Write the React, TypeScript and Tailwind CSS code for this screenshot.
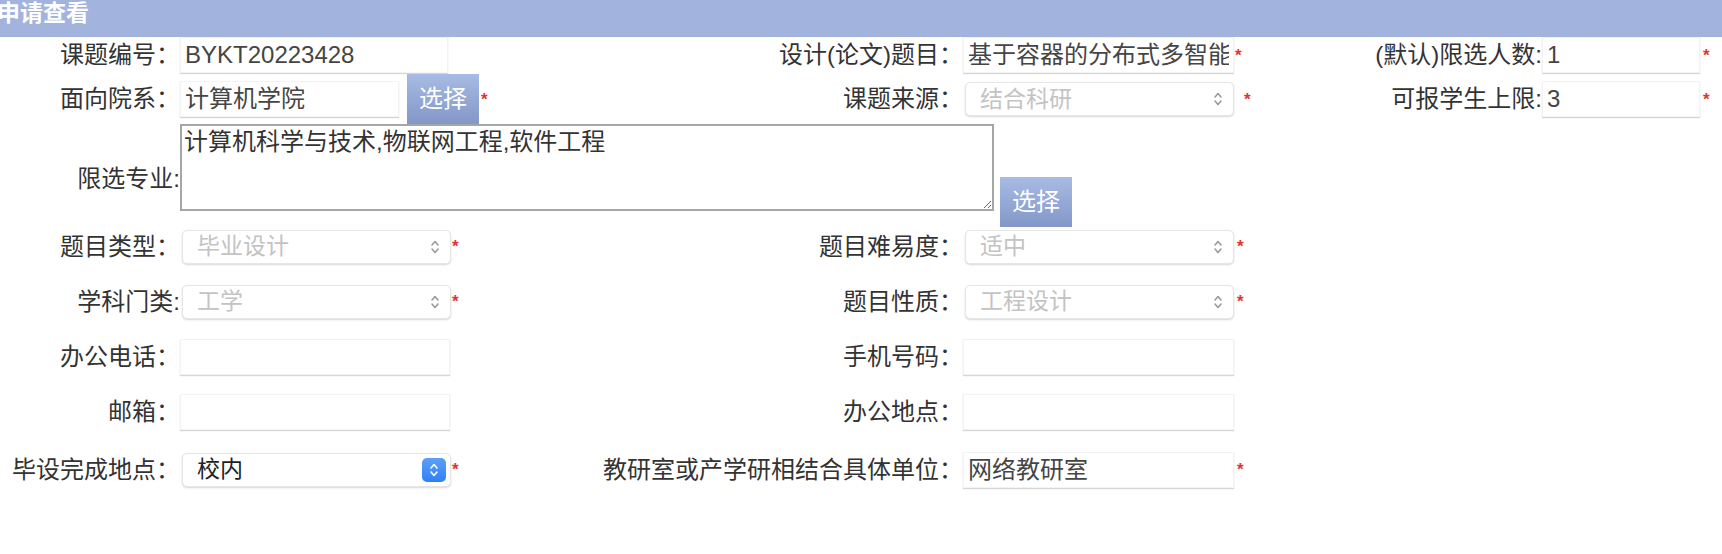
import React from "react";

const cols = "grid grid-cols-[180px_384px_399px_329px_250px_180px]";

function Star({ className = "" }: { className?: string }) {
  return <span className={`text-[#e5322d] text-[17px] font-bold leading-none ${className}`}>*</span>;
}

function Label({ children, className = "" }: { children: React.ReactNode; className?: string }) {
  return (
    <div className={`text-right text-[24px] leading-[28px] text-[#333] whitespace-nowrap ${className}`}>{children}</div>
  );
}

function TextBox({ value = "", width }: { value?: string; width: string }) {
  return (
    <input
      readOnly
      value={value}
      className={`${width} h-[36px] bg-white border border-[#f3f3f3] shadow-[0_1px_1px_rgba(0,0,0,0.16)] px-[4px] text-[24px] text-[#454545] outline-none`}
    />
  );
}

function Chevrons({ color }: { color: string }) {
  return (
    <svg width="10" height="16" viewBox="0 0 10 16" fill="none" stroke={color} strokeWidth="1.6" strokeLinecap="round" strokeLinejoin="round">
      <path d="M2 6 L5 2.5 L8 6" />
      <path d="M2 10 L5 13.5 L8 10" />
    </svg>
  );
}

function Picker({ value, active = false }: { value: string; active?: boolean }) {
  return (
    <div
      className={`ml-[2px] w-[269px] h-[34px] rounded-[5px] bg-white border border-[#e6e6e6] shadow-[0_1px_2px_rgba(0,0,0,0.16)] flex items-center justify-between pl-[14px] text-[23px] ${
        active ? "pr-[4px] text-[#222]" : "pr-[10px] text-[#c3c3c3]"
      }`}
    >
      <span className="leading-none">{value}</span>
      {active ? (
        <span className="w-[24px] h-[24px] rounded-[5px] bg-gradient-to-b from-[#5d9ff9] to-[#2f80f7] flex items-center justify-center">
          <Chevrons color="#ffffff" />
        </span>
      ) : (
        <Chevrons color="#9a9a9a" />
      )}
    </div>
  );
}

function PickButton({ className = "" }: { className?: string }) {
  return (
    <button className={`w-[72px] h-[50px] bg-gradient-to-b from-[#a8bbe4] to-[#8397c8] text-white text-[24px] leading-none ${className}`}>
      选择
    </button>
  );
}

export default function App() {
  return (
    <div className="w-[1722px] h-[554px] bg-white font-['Liberation_Sans','Noto_Sans_CJK_SC',sans-serif] overflow-hidden">
      <div className="h-[37px] bg-[#a2b4dd] text-white font-bold text-[23px] leading-[26px] -indent-[3px]">申请查看</div>

      {/* row 1 */}
      <div className={`${cols} h-[37px] items-start`}>
        <Label className="pt-[4px]">课题编号：</Label>
        <div className="flex">
          <TextBox value="BYKT20223428" width="w-[268px]" />
        </div>
        <Label className="pt-[4px]">设计(论文)题目：</Label>
        <div className="flex items-center">
          <TextBox value="基于容器的分布式多智能体系统设计与实现" width="w-[271px]" />
          <Star className="ml-[1px]" />
        </div>
        <Label className="pt-[4px]">(默认)限选人数:</Label>
        <div className="flex items-center">
          <TextBox value="1" width="w-[158px]" />
          <Star className="ml-[3px]" />
        </div>
      </div>

      {/* row 2 */}
      <div className={`${cols} h-[50px] items-center`}>
        <Label>面向院系：</Label>
        <div className="flex items-center">
          <TextBox value="计算机学院" width="w-[219px]" />
          <PickButton className="ml-[8px]" />
          <Star className="ml-[2px]" />
        </div>
        <Label>课题来源：</Label>
        <div className="flex items-center">
          <Picker value="结合科研" />
          <Star className="ml-[10px]" />
        </div>
        <Label>可报学生上限:</Label>
        <div className="flex items-center">
          <TextBox value="3" width="w-[158px]" />
          <Star className="ml-[3px]" />
        </div>
      </div>

      {/* row 3 */}
      <div className={`${cols} h-[95px] items-start`}>
        <Label className="pt-[41px]">限选专业:</Label>
        <div className="col-span-3 flex items-end h-full">
          <textarea
            readOnly
            value="计算机科学与技术,物联网工程,软件工程"
            className="w-[814px] h-[87px] self-start border-2 border-[#a6a6a6] px-[2px] pt-[2px] text-[24px] leading-[28px] text-[#333] outline-none"
          />
          <PickButton className="ml-[6px] -mb-[8px] h-[49px]" />
        </div>
      </div>

      {/* rows 4-8 */}
      <div className={`${cols} h-[55px] items-center`}>
        <Label>题目类型：</Label>
        <div className="flex items-center">
          <Picker value="毕业设计" />
          <Star className="ml-[1px]" />
        </div>
        <Label>题目难易度：</Label>
        <div className="flex items-center">
          <Picker value="适中" />
          <Star className="ml-[3px]" />
        </div>
        <div />
        <div />
      </div>

      <div className={`${cols} h-[55px] items-center`}>
        <Label>学科门类:</Label>
        <div className="flex items-center">
          <Picker value="工学" />
          <Star className="ml-[1px]" />
        </div>
        <Label>题目性质：</Label>
        <div className="flex items-center">
          <Picker value="工程设计" />
          <Star className="ml-[3px]" />
        </div>
        <div />
        <div />
      </div>

      <div className={`${cols} h-[55px] items-center`}>
        <Label>办公电话：</Label>
        <div className="flex">
          <TextBox width="w-[270px]" />
        </div>
        <Label>手机号码：</Label>
        <div className="flex">
          <TextBox width="w-[271px]" />
        </div>
        <div />
        <div />
      </div>

      <div className={`${cols} h-[56px] items-center`}>
        <Label>邮箱：</Label>
        <div className="flex">
          <TextBox width="w-[270px]" />
        </div>
        <Label>办公地点：</Label>
        <div className="flex">
          <TextBox width="w-[271px]" />
        </div>
        <div />
        <div />
      </div>

      <div className={`${cols} h-[59px] items-center`}>
        <Label>毕设完成地点：</Label>
        <div className="flex items-center">
          <Picker value="校内" active />
          <Star className="ml-[1px]" />
        </div>
        <Label>教研室或产学研相结合具体单位：</Label>
        <div className="flex items-center">
          <TextBox value="网络教研室" width="w-[271px]" />
          <Star className="ml-[3px]" />
        </div>
        <div />
        <div />
      </div>
    </div>
  );
}
